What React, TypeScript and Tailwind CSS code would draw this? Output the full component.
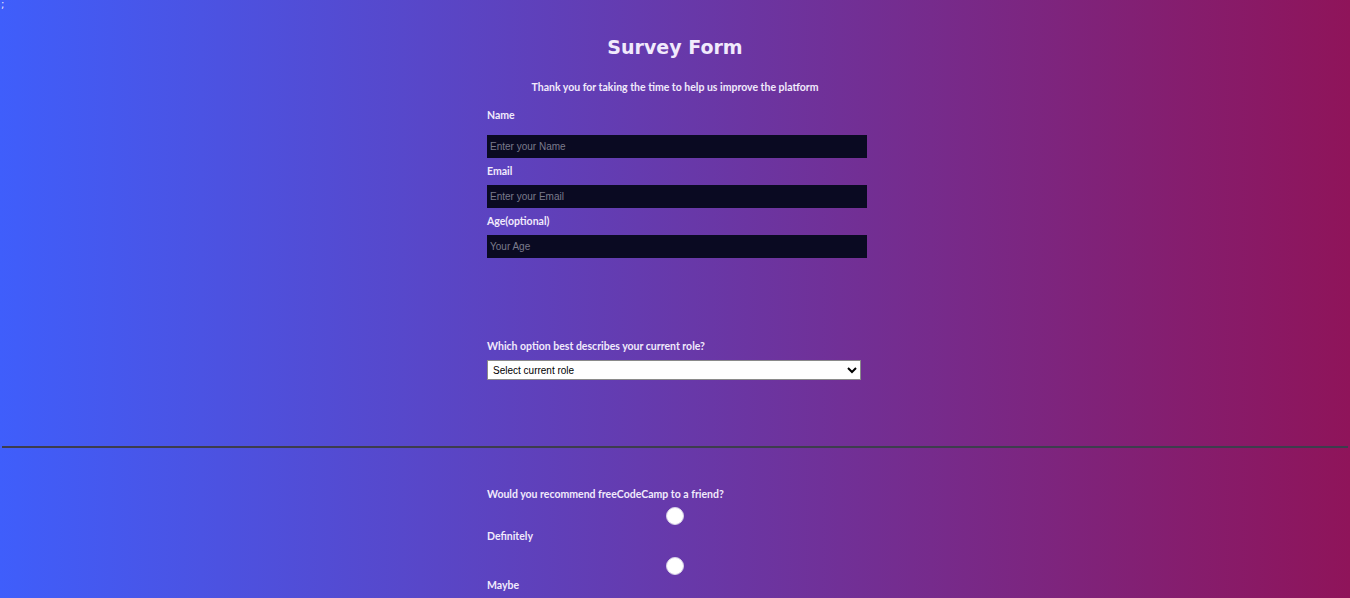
import React from 'react';

const Label = ({ children, className = '' }: { children: React.ReactNode; className?: string }) => (
    <label className={`block font-['Lato',sans-serif] text-[10.5px] leading-[14px] font-bold text-[#f1eafc] ${className}`}>{children}</label>
);

const TextInput = ({ placeholder }: { placeholder: string }) => (
    <input
        type="text"
        placeholder={placeholder}
        className="block w-[380px] h-[23px] px-[3px] bg-[#0a0a22] text-[10px] text-gray-300 placeholder:text-[#7b7b8c] font-['Liberation_Sans',sans-serif] outline-none"
    />
);

const Radio = () => (
    <div className="flex justify-center">
        <span className="block w-[18px] h-[18px] rounded-full bg-white border border-[#d6d0e6]" />
    </div>
);

export default function App() {
    return (
        <div className="min-h-[598px] bg-linear-to-r/srgb from-[#3f5efb] to-[#8f145a] text-[#f1eafc] font-['DejaVu_Sans',sans-serif]">
            <div className="text-[10px] leading-[10px] h-[10px] pl-[1px]">;</div>

            <h1 className="mt-[24px] text-center text-[19px] leading-[26px] font-bold">Survey Form</h1>
            <p className="mt-[20px] text-center font-['Lato',sans-serif] text-[10.5px] leading-[14px] font-bold">
                Thank you for taking the time to help us improve the platform
            </p>

            <form className="w-[376px] mx-auto mt-[14px]">
                <Label>Name</Label>
                <div className="mt-[13px]"><TextInput placeholder="Enter your Name" /></div>
                <Label className="mt-[6px]">Email</Label>
                <div className="mt-[7px]"><TextInput placeholder="Enter your Email" /></div>
                <Label className="mt-[6px]">Age(optional)</Label>
                <div className="mt-[7px]"><TextInput placeholder="Your Age" /></div>

                <Label className="mt-[81px]">Which option best describes your current role?</Label>
                <select className="mt-[7px] block w-[374px] h-[20px] bg-white text-black border border-[#8a8a8a] text-[10px] font-['Liberation_Sans',sans-serif] px-[1px]">
                    <option>Select current role</option>
                    <option>Student</option>
                    <option>Full Time Job</option>
                    <option>Prefer not to say</option>
                </select>
            </form>

            <hr className="mt-[66px] mx-[2px] border-0 h-[2px] bg-[#3d3d4d]" />

            <div className="w-[376px] mx-auto mt-[39px]">
                <Label>Would you recommend freeCodeCamp to a friend?</Label>
                <div className="mt-[6px]"><Radio /></div>
                <Label className="mt-[4px]">Definitely</Label>
                <div className="mt-[14px]"><Radio /></div>
                <Label className="mt-[3px]">Maybe</Label>
            </div>
        </div>
    );
}
